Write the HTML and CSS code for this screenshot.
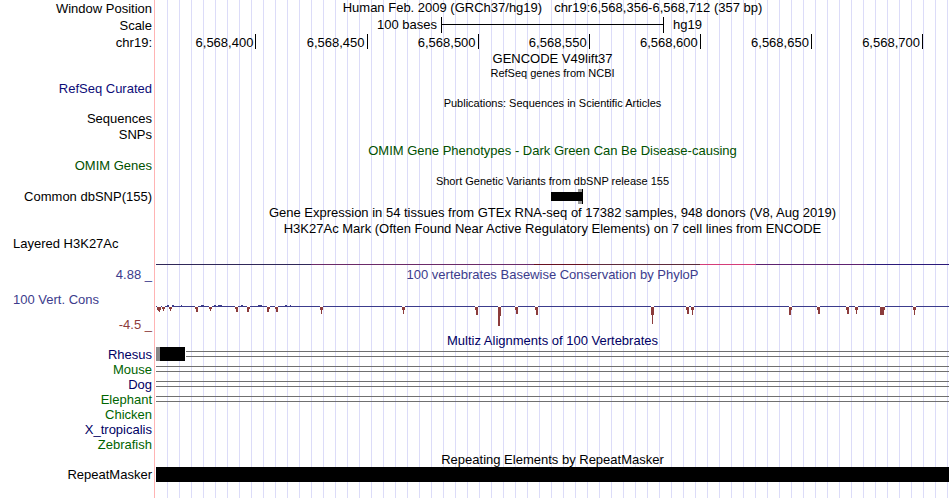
FILE: index.html
```html
<!DOCTYPE html>
<html lang="en">
<head>
<meta charset="utf-8">
<title>Human chr19:6,568,356-6,568,712</title>
<link rel="stylesheet" href="styles.css">
</head>
<body>
<main class="browser">
  <div class="row head"><div class="label">Window Position</div><div class="track title position"><span>Human Feb. 2009 (GRCh37/hg19)</span><span>chr19:6,568,356-6,568,712 (357 bp)</span></div></div>
  <div class="row head"><div class="label">Scale</div><div class="track scale"><span class="scale-size">100 bases</span><span class="scale-bar"></span><span class="scale-db">hg19</span></div></div>
  <div class="row head"><div class="label">chr19:</div><div class="track ruler"><span>6,568,400</span><span>6,568,450</span><span>6,568,500</span><span>6,568,550</span><span>6,568,600</span><span>6,568,650</span><span>6,568,700</span></div></div>

  <div class="row"><div class="label"></div><div class="track title">GENCODE V49lift37</div></div>
  <div class="row"><div class="label"></div><div class="track title small">RefSeq genes from NCBI</div></div>
  <div class="row"><div class="label navy">RefSeq Curated</div><div class="track"></div></div>
  <div class="row"><div class="label"></div><div class="track title small">Publications: Sequences in Scientific Articles</div></div>
  <div class="row"><div class="label">Sequences</div><div class="track"></div></div>
  <div class="row tall"><div class="label">SNPs</div><div class="track"></div></div>
  <div class="row"><div class="label"></div><div class="track title green">OMIM Gene Phenotypes - Dark Green Can Be Disease-causing</div></div>
  <div class="row"><div class="label green">OMIM Genes</div><div class="track"></div></div>
  <div class="row mid"><div class="label"></div><div class="track title small">Short Genetic Variants from dbSNP release 155</div></div>
  <div class="row"><div class="label">Common dbSNP(155)</div><div class="track">
    <svg class="plot" viewBox="0 0 793 15" preserveAspectRatio="none" aria-hidden="true">
      <rect x="422" y="0" width="4" height="15" fill="#999"/>
      <rect x="395" y="3" width="31" height="9"/>
      <rect x="426" y="0" width="1" height="15"/>
    </svg></div></div>
  <div class="row tall"><div class="label"></div><div class="track title">Gene Expression in 54 tissues from GTEx RNA-seq of 17382 samples, 948 donors (V8, Aug 2019)</div></div>
  <div class="row"><div class="label"></div><div class="track title">H3K27Ac Mark (Often Found Near Active Regulatory Elements) on 7 cell lines from ENCODE</div></div>
  <div class="row histone"><div class="label side">Layered H3K27Ac</div><div class="track"><div class="signal"></div></div></div>

  <div class="row conservation">
    <div class="label limits"><span class="blue">4.88 _</span><span class="side blue">100 Vert. Cons</span><span class="red">-4.5 _</span></div>
    <div class="track">
      <div class="title blue">100 vertebrates Basewise Conservation by PhyloP</div>
      <svg class="plot wiggle" viewBox="0 0 793 52" preserveAspectRatio="none" aria-hidden="true">
        <path fill="#3c3c8c" d="M0 24H793V25H0ZM11 23h2v1h-2ZM16 23h2v1h-2ZM25 23h1v1h-1ZM45 23h3v1h-3ZM58 23h2v1h-2ZM62 23h4v1h-4ZM85 23h2v1h-2ZM102 23h4v1h-4ZM129 23h2v1h-2ZM134 23h1v1h-1Z"/>
        <path fill="#fff" d="M1 24h4v1h-4ZM6 24h3v1h-3ZM13 24h3v1h-3ZM39 24h3v1h-3ZM53 24h3v1h-3ZM79 24h3v1h-3ZM91 24h3v1h-3ZM111 24h3v1h-3ZM119 24h3v1h-3ZM164 24h3v1h-3ZM246 24h3v1h-3ZM319 24h3v1h-3ZM342 24h3v1h-3ZM359 24h3v1h-3ZM379 24h3v1h-3ZM495 24h3v1h-3ZM530 24h3v1h-3ZM535 24h3v1h-3ZM633 24h3v1h-3ZM661 24h3v1h-3ZM690 24h3v1h-3ZM699 24h3v1h-3ZM724 24h5v1h-5ZM757 24h3v1h-3Z"/>
        <path fill="#8c3c3c" d="M1 25h4v3h-1v2h-1v-1h-1v-1h-1ZM6 25h3v2h-1v2h-1v-2h-1ZM13 25h3v2h-1v2h-1v-2h-1ZM39 25h3v5h-2v-3h-1ZM53 25h3v2h-1v2h-1v-2h-1ZM79 25h3v5h-2v-3h-1ZM91 25h3v2h-1v3h-2ZM111 25h3v2h-1v3h-2ZM119 25h3v5h-2v-3h-1ZM164 25h3v3h-1v4h-1v-4h-1ZM246 25h3v3h-1v4h-1v-4h-1ZM319 25h3v8h-2v-5h-1ZM342 25h3v9h-1v10h-2ZM359 25h3v7h-2v-4h-1ZM379 25h3v8h-2v-5h-1ZM495 25h3v8h-1v9h-1v-9h-1ZM530 25h3v7h-2v-4h-1ZM535 25h3v3h-1v5h-1v-5h-1ZM633 25h3v3h-1v5h-2ZM661 25h3v7h-2v-4h-1ZM690 25h3v7h-2v-4h-1ZM699 25h3v3h-1v4h-1v-4h-1ZM724 25h5v3h-1v5h-4ZM757 25h3v3h-1v5h-1v-5h-1Z"/>
      </svg>
    </div>
  </div>
  <div class="row short"><div class="label"></div><div class="track title navy2">Multiz Alignments of 100 Vertebrates</div></div>
  <div class="row"><div class="label navy2">Rhesus</div><div class="track align"><div class="block"></div><div class="gap"></div></div></div>
  <div class="row"><div class="label green2">Mouse</div><div class="track"><div class="gap"></div></div></div>
  <div class="row"><div class="label navy2">Dog</div><div class="track"><div class="gap"></div></div></div>
  <div class="row"><div class="label green2">Elephant</div><div class="track"><div class="gap"></div></div></div>
  <div class="row"><div class="label green2">Chicken</div><div class="track"></div></div>
  <div class="row"><div class="label navy2">X_tropicalis</div><div class="track"></div></div>
  <div class="row"><div class="label green2">Zebrafish</div><div class="track"></div></div>
  <div class="row"><div class="label"></div><div class="track title">Repeating Elements by RepeatMasker</div></div>
  <div class="row"><div class="label">RepeatMasker</div><div class="track"><div class="repeat"></div></div></div>
</main>
</body>
</html>
```
FILE: styles.css
```css
* { box-sizing: border-box; }

body {
  margin: 0;
  background: #fff;
  color: #000;
  font: 13px/15px "Liberation Sans", Arial, sans-serif;
}

/* Vertical guide lines start 12px right of the label column. */
.browser {
  min-height: 100vh;
  background:
    linear-gradient(#ffb4b4, #ffb4b4) 154px 0 / 1px 100% no-repeat,
    repeating-linear-gradient(to right, #dcdcf8 0, #dcdcf8 1px, transparent 1px, transparent 12px) 167px 0 no-repeat;
}

.row {
  display: grid;
  grid-template-columns: 155px minmax(0, 1fr);
  min-height: 15px;
  white-space: nowrap;
}
.head { min-height: 17px; line-height: 17px; }
.mid { min-height: 16px; line-height: 16px; }
.tall { min-height: 17px; line-height: 17px; }
.short { min-height: 13px; line-height: 13px; }
.histone { min-height: 31px; }
.conservation { min-height: 67px; }

.label { padding-right: 3px; text-align: right; }
.side { padding-left: 13px; text-align: left; }
.track { padding: 0 1px; }
.title { text-align: center; }
.small { font-size: 11px; }

.navy { color: #0c0c78; }
.navy2 { color: #000064; }
.green { color: #005000; }
.green2 { color: #006400; }
.blue { color: #3c3c8c; }
.red { color: #8c3c3c; }

.position {
  display: flex;
  justify-content: center;
  gap: 12px;
  line-height: 15px;
}

.scale {
  display: grid;
  grid-template-columns: 286fr 223fr 285fr;
  padding: 0 1px 0 0;
  line-height: 16px;
}
.scale-size { padding-right: 4px; text-align: right; }
.scale-bar {
  height: 16px;
  border: solid #000;
  border-width: 0 1px;
  background: linear-gradient(#000, #000) 0 7px / 100% 1px no-repeat;
}
.scale-db { padding-left: 9px; }

.ruler {
  display: grid;
  grid-template-columns: 1014fr repeat(6, 1111fr) 260fr;
  padding: 0 1px 0 0;
}
.ruler span {
  height: 15px;
  padding-right: 2px;
  border-right: 1px solid #000;
  text-align: right;
}

.plot { display: block; width: 100%; height: 15px; shape-rendering: crispEdges; }
.wiggle { height: 52px; }

.signal {
  height: 1px;
  margin-top: 28px;
  background: linear-gradient(to right,
    #302858 0 19.5%, #6b2a68 19.5% 47.7%, #681020 47.7% 54.5%,
    #5e2a3a 54.5% 68.6%, #d43d78 68.6% 75.7%, #5d2270 75.7% 89.7%, #2c1a7a 89.7%);
}

.limits { display: flex; flex-direction: column; gap: 10px; }

.align { display: grid; grid-template-columns: 29fr 764fr; column-gap: 1px; }
.block { height: 14px; border-left: 4px solid #888; background: #000; }
.gap {
  height: 6px;
  margin-top: 4px;
  border: solid #707070;
  border-width: 1px 0;
}

.repeat { height: 15px; background: #000; }
```
